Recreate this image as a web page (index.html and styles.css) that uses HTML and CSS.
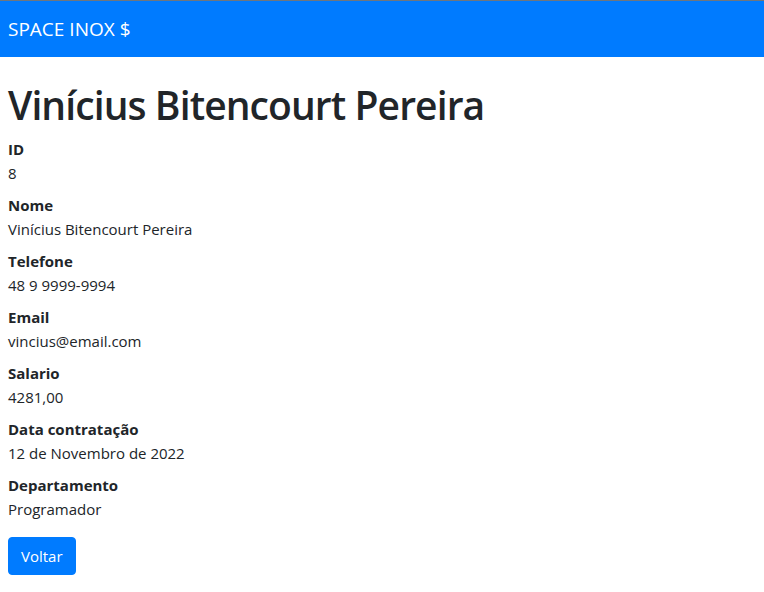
FILE: index.html
```html
<!DOCTYPE html>
<html lang="pt-BR">
<head>
<meta charset="utf-8">
<title>Detalhes</title>
<link rel="stylesheet" href="styles.css">
</head>
<body>
<nav class="navbar">
  <span class="brand">SPACE INOX $</span>
</nav>
<main class="content">
  <h1 class="title">Vinícius Bitencourt Pereira</h1>
  <dl class="details">
    <dt>ID</dt>
    <dd>8</dd>
    <dt>Nome</dt>
    <dd>Vinícius Bitencourt Pereira</dd>
    <dt>Telefone</dt>
    <dd>48 9 9999-9994</dd>
    <dt>Email</dt>
    <dd>vincius@email.com</dd>
    <dt>Salario</dt>
    <dd>4281,00</dd>
    <dt>Data contratação</dt>
    <dd>12 de Novembro de 2022</dd>
    <dt>Departamento</dt>
    <dd>Programador</dd>
  </dl>
  <a class="btn" href="#">Voltar</a>
</main>
</body>
</html>
```

FILE: styles.css
```css
* { box-sizing: border-box; }
html, body {
  margin: 0;
  padding: 0;
}
body {
  font-family: "Open Sans", "Noto Sans", sans-serif;
  font-size: 15px;
  line-height: 24px;
  color: #212529;
  background: #fff;
  border-top: 1px solid #6f767d;
}
.navbar {
  height: 56px;
  background: #007bff;
  display: flex;
  align-items: center;
  padding: 0 8px;
}
.brand {
  color: #fff;
  font-size: 19px;
  line-height: 30px;
}
.content {
  padding: 24px 8px 0;
}
.title {
  margin: 0 0 8px;
  font-size: 39px;
  line-height: 48px;
  font-weight: 600;
  letter-spacing: -0.9px;
}
.details {
  margin: 0;
}
.details dt {
  font-weight: 700;
}
.details dd {
  margin: 0 0 8px;
}
.btn {
  display: inline-block;
  margin-top: 8px;
  padding: 6px 12px;
  border: 1px solid #007bff;
  border-radius: 4px;
  background: #007bff;
  color: #fff;
  text-decoration: none;
  font-size: 15px;
  line-height: 24px;
}
```
